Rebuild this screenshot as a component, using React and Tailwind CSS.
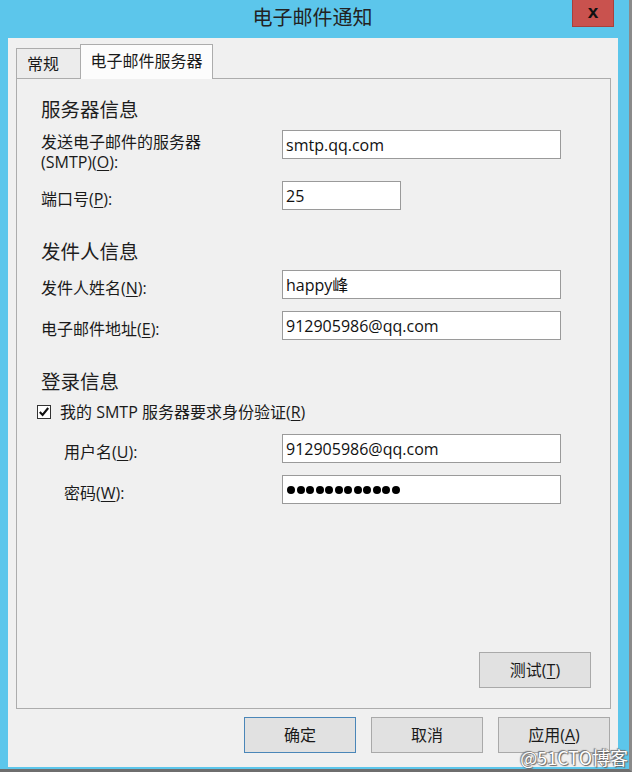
import React from "react";

const U = ({ children }) => <span className="underline underline-offset-2">{children}</span>;

function Field({ label, value, width = "w-[279px]", pt = "pt-[8px]", mt, labelPl = "pl-0", labelW = "w-[241px]", children }) {
  return (
    <div className={`flex items-start ${mt}`}>
      <div className={`${labelW} ${pt} ${labelPl} text-[16px] leading-[20px] text-[#1a1a1a]`}>{label}</div>
      <div className={`${width} h-[29px] bg-white border border-[#9a9a9a] flex items-center pl-[3px] text-[16px] text-[#111]`}>
        {children || value}
      </div>
    </div>
  );
}

function Btn({ children, def }) {
  return (
    <div
      className={`w-[112px] h-[36px] flex items-center justify-center text-[16px] text-[#1a1a1a] bg-[#e1e1e1] border ${
        def ? "border-[#4a86b8]" : "border-[#a9a9a9]"
      }`}
    >
      {children}
    </div>
  );
}

export default function App() {
  return (
    <div className="w-[632px] h-[772px] bg-[#5cc6eb] relative overflow-hidden flex flex-col border-r-[3px] border-b-[3px] border-r-[#8a8a8a] border-b-[#6e6e6e] font-['Open_Sans','Noto_Sans_CJK_SC',sans-serif]">
      {/* title bar */}
      <div className="h-[38px] flex items-center justify-center relative shrink-0">
        <span className="text-[20px] text-[#222] -mt-[2px] -ml-[4px]">电子邮件通知</span>
        <div className="absolute right-[15px] top-0 w-[42px] h-[27px] bg-[#c9524e] border-b border-x border-[#a8403c] flex items-center justify-center">
          <span className="text-[19px] font-bold text-[#111] leading-none font-['Liberation_Sans',sans-serif] -mt-[4px]">x</span>
        </div>
      </div>

      {/* client area */}
      <div className="ml-[8px] w-[610px] h-[729px] bg-[#f0f0f0] flex flex-col px-[8px] pt-[6px] pb-[14px]">
        {/* tabs */}
        <div className="flex items-end h-[34px] shrink-0 relative z-10">
          <div className="w-[65px] h-[30px] border-t border-l border-r border-[#acacac] bg-[#ececec] flex items-center pl-[10px] text-[16px] text-[#1a1a1a]">
            常规
          </div>
          <div className="-ml-px w-[133px] h-[35px] -mb-px border-t border-l border-r border-[#acacac] bg-[#fcfcfc] flex items-center justify-center text-[16px] text-[#1a1a1a] pb-[3px]">
            电子邮件服务器
          </div>
        </div>

        {/* panel */}
        <div className="w-[595px] h-[631px] border border-[#acacac] bg-[#f0f0f0] flex flex-col pl-[24px] pr-[19px] pb-[20px]">
          <div className="mt-[19px] text-[19.5px] leading-[24px] text-[#1e1e1e]">服务器信息</div>
          <Field
            mt="mt-[8px]"
            pt="pt-[2px]"
            label={
              <>
                发送电子邮件的服务器
                <br />
                (SMTP)(<U>O</U>):
              </>
            }
            value="smtp.qq.com"
          />
          <Field mt="mt-[9px]" width="w-[119px]" label={<>端口号(<U>P</U>):</>} value="25" />

          <div className="mt-[30px] text-[19.5px] leading-[24px] text-[#1e1e1e]">发件人信息</div>
          <Field mt="mt-[6px]" label={<>发件人姓名(<U>N</U>):</>} value="happy峰" />
          <Field mt="mt-[12px]" label={<>电子邮件地址(<U>E</U>):</>} value="912905986@qq.com" />

          <div className="mt-[30px] text-[19.5px] leading-[24px] text-[#1e1e1e]">登录信息</div>
          <div className="mt-[8px] -ml-[4px] flex items-center h-[20px] text-[16px] text-[#1a1a1a]">
            <div className="w-[14px] h-[14px] bg-white border border-[#333] flex items-center justify-center mr-[9px]">
              <svg width="12" height="12" viewBox="0 0 12 12">
                <path d="M1.8 6 L4.6 9 L10.2 2" fill="none" stroke="#111" strokeWidth="2.1" />
              </svg>
            </div>
            <span>
              我的 SMTP 服务器要求身份验证(<U>R</U>)
            </span>
          </div>
          <Field mt="mt-[12px]" labelPl="pl-[23px]" label={<>用户名(<U>U</U>):</>} value="912905986@qq.com" />
          <Field mt="mt-[12px]" labelPl="pl-[23px]" label={<>密码(<U>W</U>):</>}>
            <div className="flex gap-[1.5px] pl-[1px]">
              {Array.from({ length: 12 }).map((_, i) => (
                <span key={i} className="w-[8px] h-[8px] rounded-full bg-black" />
              ))}
            </div>
          </Field>

          <div className="flex-1" />
          <div className="flex justify-end">
            <Btn>
              测试(<U>T</U>)
            </Btn>
          </div>
        </div>

        {/* bottom buttons */}
        <div className="mt-[8px] flex justify-end gap-[15px]">
          <Btn def>确定</Btn>
          <Btn>取消</Btn>
          <Btn>
            应用(<U>A</U>)
          </Btn>
        </div>
      </div>

      {/* watermark */}
      <div className="absolute right-[1px] bottom-[0px] leading-[24px] text-[18px] text-white font-['Noto_Sans_CJK_SC',sans-serif] [text-shadow:0_0_1px_#555,1px_1px_1px_#666,-1px_-1px_1px_#777]">
        @51CTO博客
      </div>
    </div>
  );
}
